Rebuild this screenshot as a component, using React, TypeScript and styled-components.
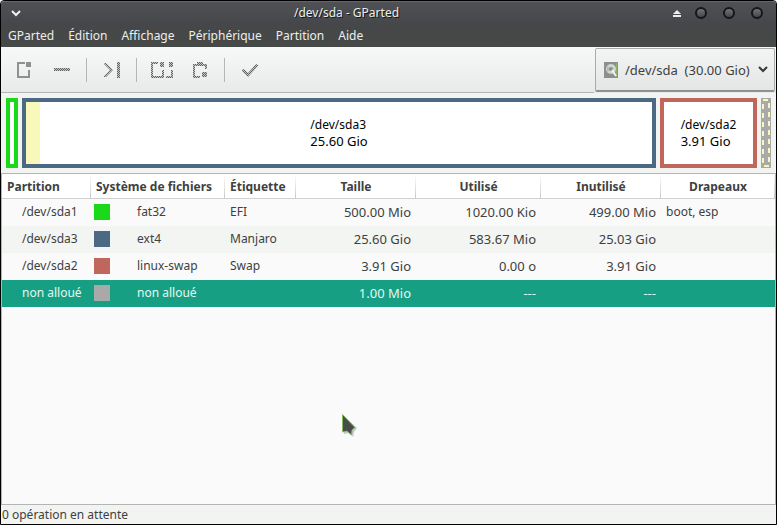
import React, { useState } from "react";
import styled, { createGlobalStyle } from "styled-components";

const Global = createGlobalStyle`
  * { box-sizing: border-box; }
  html, body, #root { height: 100%; margin: 0; }
  body { background: #fff; font-family: "Noto Sans", "Open Sans", sans-serif; font-size: 12px; color: #3e4140; overflow: hidden; }
  button, select { font: inherit; color: inherit; }
`;

const Window = styled.div`
  height: 100%;
  display: flex;
  flex-direction: column;
  border: 1px solid #000;
  border-radius: 4px 4px 0 0;
  background: #f2f4f2;
  overflow: hidden;
`;

const Chrome = styled.div`
  flex: none;
  background: linear-gradient(#505156, #45474b 22px, #454846 30px, #454947);
  border-top: 1px solid #65666a;
  color: #eceeed;
`;

const TitleBar = styled.header`
  display: grid;
  grid-template-columns: 120px 1fr 120px;
  align-items: center;
  height: 21px;
`;

const Title = styled.h1`
  margin: 0;
  padding-right: 84px;
  font-size: 12px;
  line-height: 22px;
  font-weight: 400;
  text-align: center;
  white-space: nowrap;
  text-shadow: 1px 1px 0 #17181a;
`;

const WindowButtons = styled.div<{ $end?: boolean }>`
  display: flex;
  justify-content: ${(p) => (p.$end ? "flex-end" : "flex-start")};
  gap: 12px;
  padding: 0 ${(p) => (p.$end ? 11 : 7)}px;
`;

const WindowButton = styled.button<{ $slim?: boolean }>`
  display: grid;
  place-items: center;
  width: ${(p) => (p.$slim ? 8 : 16)}px;
  height: 16px;
  padding: 0;
  border: 0;
  background: none;
`;

const MenuBar = styled.nav`
  display: flex;
  height: 24px;
`;

const MenuItem = styled.button`
  padding: 0 7px;
  border: 0;
  background: none;
  line-height: 26px;
`;

const Toolbar = styled.div`
  flex: none;
  display: flex;
  align-items: stretch;
  height: 46px;
  background: linear-gradient(#f7f8f8, #e8eae9);
`;

const Tools = styled.div`
  flex: 1;
  display: flex;
  align-items: center;
  padding-left: 4px;
  border-bottom: 1px solid #b5b7b6;
`;

const Tool = styled.button`
  display: grid;
  place-items: center;
  width: 38px;
  height: 36px;
  padding: 0;
  border: 0;
  background: none;
`;

const Divider = styled.span`
  width: 1px;
  height: 24px;
  margin: 0 6px 0 5px;
  background: #b5b7b6;
`;

const DevicePicker = styled.label`
  display: flex;
  align-items: center;
  gap: 7px;
  width: 180px;
  height: 44px;
  margin: 1px 1px 0 1px;
  padding: 0 6px 0 8px;
  border: 1px solid #a9abaa;
  border-bottom: 2px solid #8f9190;
  border-radius: 2px;
  background: linear-gradient(#f3f4f4, #e4e6e5);
`;

const DeviceSelect = styled.select`
  flex: 1;
  min-width: 0;
  padding: 0;
  border: 0;
  outline: 0;
  appearance: none;
  background: none;
  font-size: 13px;
`;

const DiskMap = styled.section`
  flex: none;
  display: flex;
  gap: 4px;
  height: 80px;
  padding: 5px;
`;

const Segment = styled.div<{ $color: string; $width?: number; $used?: number }>`
  flex: ${(p) => (p.$width ? `0 0 ${p.$width}px` : "1")};
  display: grid;
  place-content: center;
  height: 70px;
  border: 4px solid ${(p) => p.$color};
  background: linear-gradient(#f8f8ba, #f8f8ba) left / ${(p) => p.$used ?? 0}px 100% no-repeat #fff;
  color: #000;
  line-height: 17px;
`;

const SegmentSize = styled.span`
  font-size: 13px;
`;

const TablePane = styled.main`
  flex: 1;
  min-height: 0;
  border: 1px solid #b3b4b3;
  background: #fafafa;
`;

const Table = styled.table`
  width: 100%;
  table-layout: fixed;
  border-collapse: separate;
  border-spacing: 0;
`;

const Head = styled.th<{ $center?: boolean }>`
  height: 25px;
  padding: 1px 4px 0 ${(p) => (p.$center ? 4 : 5)}px;
  border-bottom: 1px solid #cfd0cf;
  background: linear-gradient(#fff, #c8c9c8) right / 1px 100% no-repeat #fff;
  font-weight: 700;
  line-height: 23px;
  text-align: ${(p) => (p.$center ? "center" : "left")};
  vertical-align: top;
  white-space: nowrap;
`;

const Row = styled.tr<{ $selected?: boolean }>`
  background: #fafafa;
  &:nth-child(2) { background: #f3f5f3; }
  && {
    ${(p) => (p.$selected ? "background: #179f84; color: #e5f7f2;" : "")}
  }
`;

const Cell = styled.td<{ $indent?: boolean }>`
  height: 27px;
  padding: 0 5px 0 ${(p) => (p.$indent ? 20 : 5)}px;
  line-height: 26px;
  vertical-align: top;
  white-space: nowrap;
`;

const NumberCell = styled(Cell)`
  font-size: 13px;
  text-align: right;
`;

const FileSystem = styled.div`
  display: flex;
  align-items: center;
  gap: 27px;
  margin-left: -2px;
`;

const Swatch = styled.span<{ $color: string }>`
  width: 16px;
  height: 16px;
  background: ${(p) => p.$color};
`;

const StatusBar = styled.footer`
  flex: none;
  height: 19px;
  padding-left: 1px;
  line-height: 20px;
`;

const Pointer = styled.svg`
  position: absolute;
  left: 340px;
  top: 412px;
  pointer-events: none;
`;

const menus = ["GParted", "Édition", "Affichage", "Périphérique", "Partition", "Aide"];

const columns = [
  { name: "Partition", width: 89 },
  { name: "Système de fichiers", width: 134 },
  { name: "Étiquette", width: 71 },
  { name: "Taille", width: 120, center: true },
  { name: "Utilisé", width: 125, center: true },
  { name: "Inutilisé", width: 120, center: true },
  { name: "Drapeaux", center: true },
];

const rows = [
  { name: "/dev/sda1", color: "#19d919", fs: "fat32", label: "EFI", size: "500.00 Mio", used: "1020.00 Kio", free: "499.00 Mio", flags: "boot, esp" },
  { name: "/dev/sda3", color: "#4b6983", fs: "ext4", label: "Manjaro", size: "25.60 Gio", used: "583.67 Mio", free: "25.03 Gio", flags: "" },
  { name: "/dev/sda2", color: "#c1665a", fs: "linux-swap", label: "Swap", size: "3.91 Gio", used: "0.00 o", free: "3.91 Gio", flags: "" },
  { name: "non alloué", color: "#a9a9a9", fs: "non alloué", label: "", size: "1.00 Mio", used: "---", free: "---", flags: "" },
];

const Orb = () => (
  <svg width="14" height="14" viewBox="0 0 14 14">
    <circle cx="7" cy="7" r="5" fill="url(#orb)" stroke="#151618" strokeWidth="2" />
  </svg>
);

const SharedPaints = () => (
  <svg width="0" height="0" style={{ position: "absolute" }} aria-hidden="true">
    <defs>
      <linearGradient id="orb" x1="0" y1="0" x2="0" y2="1">
        <stop offset="0" stopColor="#77797c" />
        <stop offset="1" stopColor="#3f4144" />
      </linearGradient>
      <pattern id="stipple" width="2" height="2" patternUnits="userSpaceOnUse">
        <rect width="2" height="2" fill="#c3c5c4" />
        <path d="M0 0h1v1H0zM1 1h1v1H1z" fill="#626463" />
      </pattern>
    </defs>
  </svg>
);

const ToolIcon = ({ d, width = 16, fill = "url(#stipple)" }: { d: string; width?: number; fill?: string }) => (
  <svg width={width} height="16" viewBox={`0 0 ${width} 16`} fill={fill} aria-hidden="true">
    <path d={d} />
  </svg>
);

export default function App() {
  const [selected, setSelected] = useState("non alloué");
  return (
    <>
      <Global />
      <SharedPaints />
      <Window>
        <Chrome>
          <TitleBar>
            <WindowButtons>
              <WindowButton aria-label="Menu de la fenêtre">
                <svg width="10" height="7" viewBox="0 0 10 7" fill="none" stroke="#f2f2f2" strokeWidth="2"><path d="M1 1l4 4 4-4" /></svg>
              </WindowButton>
            </WindowButtons>
            <Title>/dev/sda - GParted</Title>
            <WindowButtons $end>
              <WindowButton $slim aria-label="Enrouler">
                <svg width="8" height="7" viewBox="0 0 8 7" fill="#eceeed"><path d="M4 0l4 4H0zM0 5h8v2H0z" /></svg>
              </WindowButton>
              <WindowButton aria-label="Réduire"><Orb /></WindowButton>
              <WindowButton aria-label="Agrandir"><Orb /></WindowButton>
              <WindowButton aria-label="Fermer"><Orb /></WindowButton>
            </WindowButtons>
          </TitleBar>
          <MenuBar>{menus.map((m) => <MenuItem key={m}>{m}</MenuItem>)}</MenuBar>
        </Chrome>

        <Toolbar>
          <Tools>
            <Tool aria-label="Nouvelle partition">
              <ToolIcon width={14} fill="#8f9190" d="M0 0h8v2H2v12h9V8h2v8H0zM9 0h5v5H9z" />
            </Tool>
            <Tool aria-label="Supprimer"><ToolIcon d="M0 6h16v3H0z" /></Tool>
            <Divider />
            <Tool aria-label="Redimensionner">
              <ToolIcon d="M0 1h2l7 7-7 7H0v-1l6-6-6-6zM13 0h3v16h-3z" />
            </Tool>
            <Divider />
            <Tool aria-label="Copier">
              <ToolIcon width={22} d="M0 0h7v2H2v12h9V8h2v8H0zM9 0h4v5H9zM18 0h4v5h-4zM20 8h2v8h-7v-2h5z" />
            </Tool>
            <Tool aria-label="Coller">
              <ToolIcon width={14} d="M4 0h6v2h4v5h-2V4H2v10h5v2H0V2h4zM9 10h5v5H9z" />
            </Tool>
            <Divider />
            <Tool aria-label="Appliquer">
              <ToolIcon d="M0 8l2-1 4 4 8-9 2 1v1L6 15 0 9z" />
            </Tool>
          </Tools>
          <DevicePicker>
            <svg width="14" height="16" viewBox="0 0 14 16" aria-hidden="true">
              <rect width="14" height="16" fill="#8d8f8e" />
              <path d="M12 1h1v14h-1z" fill="#8bb36f" />
              <circle cx="7" cy="7" r="5" fill="#cfd6cf" />
              <path d="M3 4l4 3-4 3z" fill="#b0bdaf" />
              <circle cx="7" cy="7" r="2" fill="#8d8f8e" />
              <path d="M8 8l4 6" stroke="#f1f3f1" strokeWidth="2" />
            </svg>
            <DeviceSelect aria-label="Périphérique" defaultValue="sda">
              <option value="sda">{"/dev/sda\u00a0\u00a0(30.00 Gio)"}</option>
            </DeviceSelect>
            <svg width="10" height="7" viewBox="0 0 10 7" fill="none" stroke="#343837" strokeWidth="2" aria-hidden="true"><path d="M1 1l4 4 4-4" /></svg>
          </DevicePicker>
        </Toolbar>

        <DiskMap>
          <Segment $color="#19d919" $width={12} />
          <Segment $color="#4b6983" $used={14}>
            <span>/dev/sda3</span>
            <SegmentSize>25.60 Gio</SegmentSize>
          </Segment>
          <Segment $color="#c1665a" $width={97}>
            <span>/dev/sda2</span>
            <SegmentSize>3.91 Gio</SegmentSize>
          </Segment>
          <svg width="10" height="70" viewBox="0 0 10 70" aria-label="non alloué">
            <rect width="10" height="70" fill="#a9a9a9" />
            <rect x="2" y="2" width="6" height="66" fill="none" stroke="#f8f8ba" strokeWidth="2" strokeDasharray="5 4" />
          </svg>
        </DiskMap>

        <TablePane>
          <Table>
            <colgroup>{columns.map((c) => <col key={c.name} width={c.width} />)}</colgroup>
            <thead>
              <tr>{columns.map((c) => <Head key={c.name} $center={c.center}>{c.name}</Head>)}</tr>
            </thead>
            <tbody>
              {rows.map((r) => (
                <Row key={r.name} $selected={r.name === selected} onClick={() => setSelected(r.name)}>
                  <Cell $indent>{r.name}</Cell>
                  <Cell><FileSystem><Swatch $color={r.color} />{r.fs}</FileSystem></Cell>
                  <Cell>{r.label}</Cell>
                  <NumberCell>{r.size}</NumberCell>
                  <NumberCell>{r.used}</NumberCell>
                  <NumberCell>{r.free}</NumberCell>
                  <Cell>{r.flags}</Cell>
                </Row>
              ))}
            </tbody>
          </Table>
        </TablePane>
        <StatusBar>0 opération en attente</StatusBar>
      </Window>
      <Pointer width="20" height="28" viewBox="0 0 20 28" aria-hidden="true">
        <path d="M4 4v18l5-1 4 4 1-5 3-4z" fill="#000" opacity=".2" />
        <path d="M2.500 2.500v17.500l4.500-1 4.500 4 .5-5 3-2.500z" fill="#4a4c4b" stroke="#86b964" />
      </Pointer>
    </>
  );
}
